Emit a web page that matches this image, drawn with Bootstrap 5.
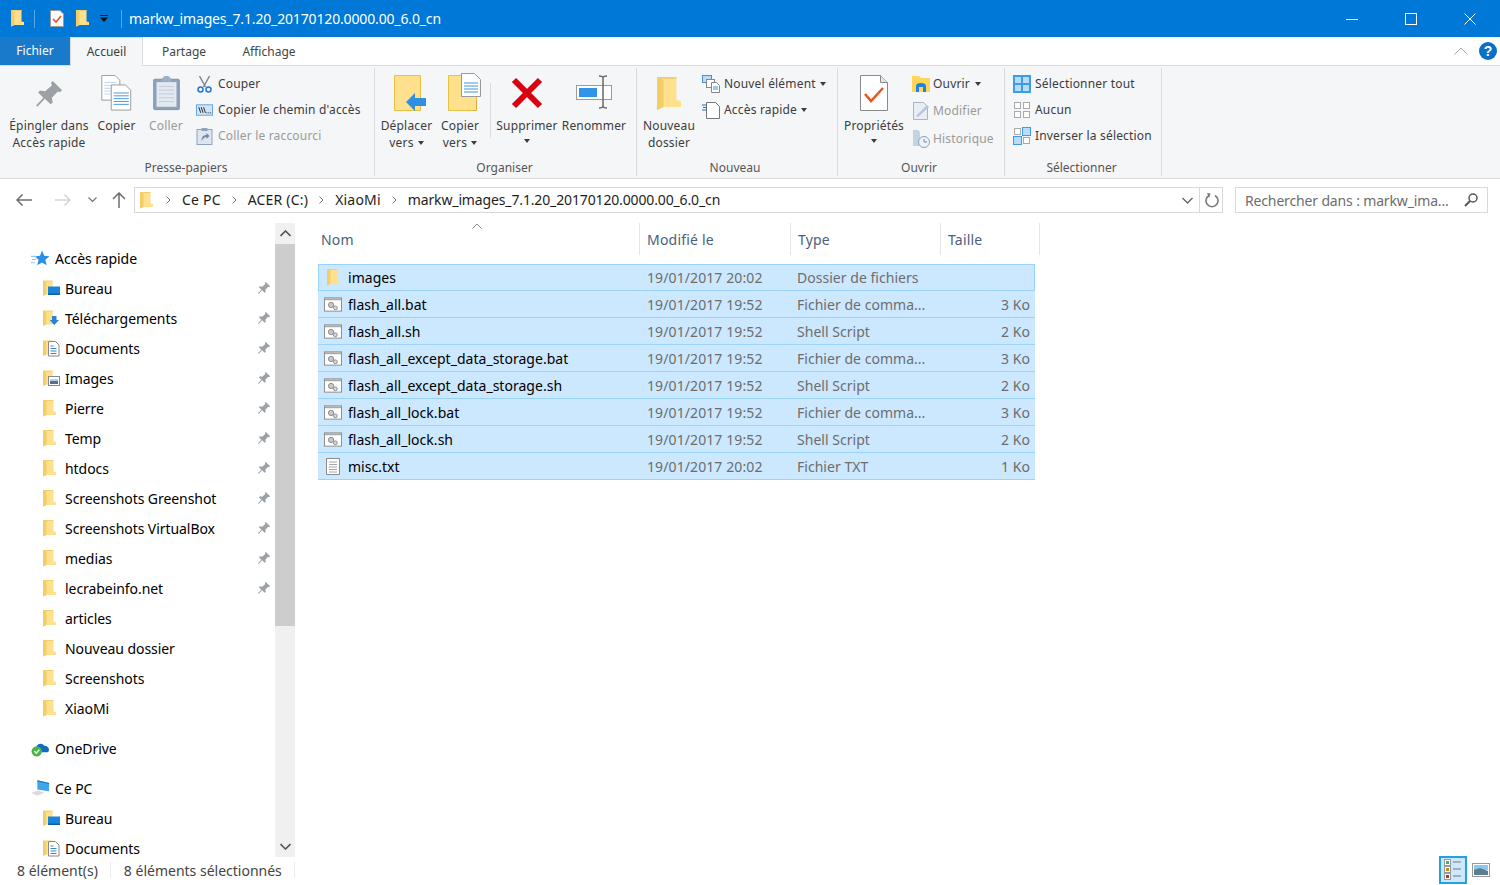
<!DOCTYPE html>
<html lang="fr">
<head>
    <meta charset="UTF-8">
    <title>markw_images_7.1.20_20170120.0000.00_6.0_cn</title>
    <link href="https://cdn.jsdelivr.net/npm/bootstrap@5.3.0/dist/css/bootstrap.min.css" rel="stylesheet">
    <style>
        html, body { height: 885px; overflow: hidden; }
        body { font-family: "Noto Sans", "Open Sans", sans-serif; font-size: 12px; color: #3c3c3c; background: #fff; }
        svg { display: block; flex: none; }

        /* barre de titre */
        .title-bar { height: 37px; background: #0078d7; color: #fff; }
        .title-text { font-size: 14px; margin-left: 7px; letter-spacing: -.15px; }
        .qa-sep { width: 1px; height: 18px; background: #5aa7e4; }
        .qa-1 { margin-left: 11px; }
        .qa-2 { margin-left: 10px; }
        .qa-3 { margin-left: 15px; }
        .qa-4 { margin-left: 12px; }
        .qa-5 { margin-left: 11px; }
        .qa-6 { margin-left: 13px; }
        .win-group { margin-right: 1px; }
        .win-btn { width: 59px; height: 37px; }

        /* onglets */
        .tab-row { height: 29px; border-bottom: 1px solid #dadbdc; }
        .tab-item { height: 29px; color: #444; }
        .tab-file { width: 70px; background: #1979ca; color: #fff; height: 28px; }
        .tab-home { width: 73px; background: #f5f6f7; border: 1px solid #dadbdc; border-bottom: 0; color: #3c3c3c; }
        .tab-share { width: 82px; }
        .tab-view { width: 88px; }
        .tab-tools { height: 28px; }
        .help-dot { width: 18px; height: 18px; border-radius: 50%; background: #0a6fc9; color: #fff; font: bold 14px/18px "Liberation Sans", sans-serif; text-align: center; margin: 0 3px 0 11px; }

        /* ruban */
        .ribbon { height: 113px; background: #f5f6f7; border-bottom: 1px solid #dadbdc; padding-top: 2px; letter-spacing: .18px; }
        .rb-group { height: 108px; border-right: 1px solid #dadbdc; }
        .rb-g1 { width: 375px; padding-left: 5px; }
        .rb-g2 { width: 262px; padding-left: 4px; }
        .rb-g3 { width: 201px; padding-left: 4px; }
        .rb-g4 { width: 167px; padding-left: 4px; }
        .rb-g5 { width: 157px; padding-left: 8px; }
        .rb-body { height: 91px; }
        .rb-name { height: 17px; line-height: 17px; color: #555; text-align: center; letter-spacing: 0; }
        .rb-g1 .rb-name { margin-left: -7px; }
        .rb-g2 .rb-name { margin-left: -6px; }
        .rb-g3 .rb-name { margin-left: -8px; }
        .rb-g4 .rb-name { margin-left: -8px; }
        .rb-g5 .rb-name { margin-left: -11px; }
        .rb-big { height: 86px; text-align: center; line-height: 17px; white-space: nowrap; }
        .rb-icon { height: 49px; padding-top: 7px; }
        .rb-off { color: #9a9a9a; }
        .rb-w88 { width: 88px; } .rb-w47 { width: 47px; } .rb-w52 { width: 52px; }
        .rb-w53 { width: 53px; } .rb-w54 { width: 54px; } .rb-w62 { width: 62px; }
        .rb-w68 { width: 68px; } .rb-w56 { width: 56px; } .rb-w64 { width: 64px; }
        .rb-nudge-1 { margin-left: 1px; }
        .rb-nudge-2 { margin-left: 2px; }
        .rb-icon-low { margin-top: 2px; }
        .rb-icon-pin { margin-top: 4px; }
        .rb-icon-move { margin-left: 6px; }
        .rb-icon-copyto { margin-left: 8px; margin-top: -2px; }
        .rb-small { padding-top: 3px; padding-left: 4px; }
        .rb-small-row { height: 26px; white-space: nowrap; gap: 5px; }
        .rb-small-tall { height: 27.5px; gap: 3px; }
        .rb-small-g3 { padding-left: 5px; }
        .rb-small-g3 .rb-small-row { gap: 4px; }
        .rb-small-g4 { padding: 2px 0 0 6px; }
        .rb-small-g4 .rb-caret { margin-left: 2px; }
        .rb-small-g5 { padding-left: 0; }
        .rb-small-g5 .rb-small-row { gap: 4px; }
        .rb-g1 .rb-small-row svg { width: 17px; }
        .rb-vsep { width: 1px; height: 55px; background: #dadbdc; margin: 15px 5px 0 3px; }
        .rb-caret { display: inline-block; width: 0; height: 0; border-left: 3.5px solid transparent; border-right: 3.5px solid transparent; border-top: 4px solid #3c3c3c; vertical-align: 2px; margin-left: 4px; }
        .rb-small-row .rb-caret { margin-left: 0; }
        .rb-small-g4 .rb-small-row .rb-caret { margin-left: 2px; }
        .rb-caret-alone { display: block; margin: 5px auto 0; }

        /* barre d'adresse */
        .addr-row { height: 44px; padding: 8px 12px 0 0; font-size: 14px; color: #1e1e1e; }
        .addr-nav { width: 134px; height: 25px; }
        .addr-back { margin-left: 16px; }
        .addr-fwd { margin-left: 23px; }
        .addr-hist { margin-left: 17px; }
        .addr-up { margin-left: 15px; }
        .addr-box { width: 1089px; height: 26px; border: 1px solid #d9d9d9; padding-left: 5px; white-space: nowrap; }
        .addr-crumb { margin: -2px 11px 0; letter-spacing: .2px; }
        .addr-last { margin: -2px 0 0 11px; letter-spacing: -.14px; }
        .addr-first { margin-left: 13px; }
        .addr-tail { margin-left: auto; width: 40px; height: 24px; }
        .addr-tail-sep { width: 1px; height: 24px; background: #d9d9d9; margin: 0 5px 0 6px; }
        .search-box { width: 253px; height: 26px; margin-left: 12px; border: 1px solid #d9d9d9; padding: 0 9px; color: #6d6d6d; white-space: nowrap; letter-spacing: -.15px; }

        /* volets */
        .panes { height: 634px; font-size: 14px; color: #000; }
        .nav-pane { width: 275px; padding-top: 20px; overflow: hidden; letter-spacing: -.06px; }
        .nav-row { height: 30px; white-space: nowrap; padding-right: 4px; }
        .nav-top { padding-left: 31px; gap: 5px; }
        .nav-sub { padding-left: 43px; gap: 5px; }
        .nav-gap { margin-top: 10px; }
        .nav-pin { margin-left: auto; }
        .scroll-bar { width: 20px; height: 634px; background: #f0f0f0; }
        .scroll-btn { height: 21px; }
        .scroll-thumb { height: 382px; background: #cdcdcd; }

        .file-pane { margin-left: 2px; padding-left: 21px; }
        .head-row { height: 32px; color: #4c607a; letter-spacing: .2px; }
        .head-cell { height: 32px; padding-left: 7px; border-right: 1px solid #e5e5e5; }
        .col-name { width: 322px; }
        .col-date { width: 151px; }
        .col-type { width: 150px; }
        .col-size { width: 99px; }
        .head-first { padding-left: 3px; }
        .sort-mark { left: 154px; top: 0; }
        .file-list { margin-top: 9px; width: 717px; }
        .file-row { height: 27px; background: #cce8ff; border-bottom: 1px solid #99d1ff; white-space: nowrap; color: #6d6d6d; letter-spacing: .03px; }
        .file-focus { border: 1px solid #99d1ff; }
        .file-name { width: 329px; padding-left: 6px; gap: 6px; color: #000; letter-spacing: .03px; }
        .file-name svg { width: 18px; }
        .file-date { width: 150px; letter-spacing: .1px; }
        .file-type { width: 150px; }
        .file-size { width: 88px; text-align: right; padding-right: 5px; }
        .file-focus .file-name { width: 328px; padding-left: 5px; }
        .file-focus .file-size { width: 87px; padding-right: 4px; }

        /* barre d'etat */
        .status-row { height: 28px; font-size: 14px; color: #444; padding: 0 0 2px 17px; white-space: nowrap; }
        .status-sep { width: 1px; height: 16px; background: #ececec; margin-left: 12px; }
        .status-gap { margin-left: 13px; }
        .status-view { width: 28px; height: 28px; background: #cce8ff; border: 2px solid #26a0da; }
        .status-thumb { margin: 0 10px 0 5px; }
    </style>
</head>
<body>
    <svg width="0" height="0" class="position-absolute">
        <defs>
            <symbol id="folder" viewBox="0 0 13 17"><path d="M0 0h10.500v11.500l2.500 .5v3H3.500L0 16.500z" fill="#ffe08c"/><path d="M0 0l3.500 1.500V15L0 16.500z" fill="#f3cd68"/><path d="M0 0h10.500v1H0z" fill="#f2cf6c"/></symbol>
            <symbol id="pin" viewBox="0 0 16 16"><path d="M10 1l5 5-1.300 1-1-.4-3.200 3.400.5 2.500-1.200 1-3-3L1.800 14.800l-.7-.7L5 10 2.200 7.200l1-1.100 2.700.4 3.600-3.100-.4-1.400z" fill="#9ba1a6"/></symbol>
            <symbol id="star" viewBox="0 0 18 16"><path d="M10.500 .5l2 5 5 .4-3.900 3.300 1.300 5.300-4.500-2.800-4.500 2.800 1.300-5.300L3.500 6l5 -.5z" fill="#2a8fe6"/><path d="M0 6h5M1 9h4M0 12h4" stroke="#8cc6f2"/></symbol>
            <symbol id="sub-desktop" viewBox="0 0 17 17"><use href="#folder" width="12" height="17"/><path d="M5 6.500h12V15H5z" fill="#1a84dc"/><path d="M5 13.500h12V15H5z" fill="#0f5fa8"/></symbol>
            <symbol id="sub-down" viewBox="0 0 17 17"><use href="#folder" width="12" height="17"/><path d="M9 6h4.500v4H16l-4.700 5-4.700-5H9z" fill="#2f7fd6"/></symbol>
            <symbol id="sub-docs" viewBox="0 0 17 17"><use href="#folder" width="12" height="17"/><path d="M5.500 1.500h7l3.500 3.500v11H5.500z" fill="#fff" stroke="#888"/><path d="M7.500 6h3M7.500 8.500h6M7.500 11h6M7.500 13.500h6" stroke="#3b87c8"/></symbol>
            <symbol id="sub-pics" viewBox="0 0 17 17"><use href="#folder" width="12" height="17"/><rect x="5.500" y="6.500" width="11" height="9" fill="#fff" stroke="#888"/><path d="M7 9h8v2H7z" fill="#a9d3f2"/><path d="M7 11h8v3H7z" fill="#5b6f80"/></symbol>
            <symbol id="plain-folder" viewBox="0 0 17 17"><use href="#folder" width="13" height="17"/></symbol>
            <symbol id="onedrive" viewBox="0 0 20 18"><path d="M5 10c0-3 2-6 5-6 2 0 3 1 4 2 3 0 5 2 5 4.500 0 1.500-1 2.500-2.500 2.500H7c-1.500 0-2-1-2-3z" fill="#0f6cc4"/><circle cx="6" cy="12" r="5.500" fill="#4cb548"/><path d="M3.500 12l2 2 3.300-3.800" fill="none" stroke="#fff" stroke-width="1.500"/></symbol>
            <symbol id="pc" viewBox="0 0 21 18"><path d="M7 0l13 3v9L7 10z" fill="#3fa5ea"/><path d="M7 0l13 3v1L7 1z" fill="#1f6fb5"/><path d="M0 14l8-3 7 3-8 3z" fill="#dcdcdc"/></symbol>
            <symbol id="bat" viewBox="0 0 19 15"><rect x=".5" y=".5" width="18" height="14" fill="#fff" stroke="#8b8b8b"/><path d="M1 1h17v2H1z" fill="#a8a8a8"/><circle cx="7.500" cy="8" r="2.800" fill="#c9c9c9" stroke="#888"/><circle cx="12" cy="11" r="2" fill="#dcdcdc" stroke="#888"/></symbol>
            <symbol id="txt" viewBox="0 0 18 17"><path d="M2.500 .5h13v16h-13z" fill="#fff" stroke="#8b8b8b"/><path d="M5 4h8M5 6.500h8M5 9h8M5 11.500h8M5 14h8" stroke="#a6a6a6"/></symbol>
            <symbol id="check-doc" viewBox="0 0 14 17"><path d="M.5 .5h9.500l3.500 3.500v12.500H.5z" fill="#fbfbfb" stroke="#9a9a9a"/><path d="M3 9l3 3 5-6" fill="none" stroke="#e8551f" stroke-width="1.600"/></symbol>
            <symbol id="crumb" viewBox="0 0 5 8"><path d="M.5 .5L4 4 .5 7.500" fill="none" stroke="#777"/></symbol>
        </defs>
    </svg>

    <header class="title-bar d-flex align-items-center">
        <svg class="qa-1" width="13" height="17"><use href="#folder"/></svg>
        <span class="qa-sep qa-2"></span>
        <svg class="qa-3" width="14" height="17"><use href="#check-doc"/></svg>
        <svg class="qa-4" width="13" height="17"><use href="#folder"/></svg>
        <svg class="qa-5" width="8" height="7" viewBox="0 0 8 7"><path d="M0 0h8v1H0zM0 2.500h8L4 7z" fill="#111"/></svg>
        <span class="qa-sep qa-6"></span>
        <span class="title-text">markw_images_7.1.20_20170120.0000.00_6.0_cn</span>
        <div class="win-group ms-auto d-flex">
            <div class="win-btn d-flex align-items-center justify-content-center"><svg width="12" height="12"><path d="M0 6.500h12" stroke="#fff"/></svg></div>
            <div class="win-btn d-flex align-items-center justify-content-center"><svg width="12" height="12"><rect x=".5" y=".5" width="11" height="11" fill="none" stroke="#fff"/></svg></div>
            <div class="win-btn d-flex align-items-center justify-content-center"><svg width="12" height="12"><path d="M.5 .5l11 11M11.500 .5l-11 11" stroke="#fff"/></svg></div>
        </div>
    </header>

    <nav class="tab-row d-flex align-items-start">
        <div class="tab-item tab-file d-flex align-items-center justify-content-center">Fichier</div>
        <div class="tab-item tab-home d-flex align-items-center justify-content-center">Accueil</div>
        <div class="tab-item tab-share d-flex align-items-center justify-content-center">Partage</div>
        <div class="tab-item tab-view d-flex align-items-center justify-content-center">Affichage</div>
        <div class="tab-tools ms-auto d-flex align-items-center">
            <svg width="14" height="8"><path d="M.5 7.500L7 1l6.500 6.500" fill="none" stroke="#aaa"/></svg>
            <div class="help-dot">?</div>
        </div>
    </nav>

    <section class="ribbon d-flex">
        <div class="rb-group rb-g1">
            <div class="rb-body d-flex">
                <div class="rb-big rb-w88">
                    <div class="rb-icon d-flex justify-content-center"><svg class="rb-icon-pin" width="30" height="30"><use href="#pin"/></svg></div>
                    Épingler dans<br>Accès rapide
                </div>
                <div class="rb-big rb-w47">
                    <div class="rb-icon d-flex justify-content-center"><svg width="31" height="36" viewBox="0 0 32 38"><path d="M.5 .5h14l5 5v21H.5z" fill="#fff" stroke="#999"/><path d="M3 8h13M3 11h13M3 14h13M3 17h13M3 20h13" stroke="#b9d5ee"/><path d="M10.500 10.500h15l5.500 5.500v21H10.500z" fill="#fff" stroke="#999"/><path d="M13 19h16M13 22h16M13 25h16M13 28h16M13 31h16" stroke="#3f95e0"/></svg></div>
                    Copier
                </div>
                <div class="rb-big rb-w52 rb-off">
                    <div class="rb-icon d-flex justify-content-center"><svg width="27" height="36" viewBox="0 0 28 38"><rect x=".5" y="4.500" width="27" height="32" rx="1" fill="#8da3bc" stroke="#7b91aa"/><rect x="3.500" y="7.500" width="21" height="26" fill="#e4e8f0"/><path d="M6 12h16M6 16h16M6 20h16M6 24h16M6 28h16" stroke="#c3ccd9"/><path d="M9 4l3-3h4l3 3v3H9z" fill="#9cafc5"/></svg></div>
                    Coller
                </div>
                <div class="rb-small">
                    <div class="rb-small-row d-flex align-items-center"><svg width="16" height="18" viewBox="0 0 16 18"><path d="M3 1l6 11M13 1L7 12" stroke="#7a8a98" stroke-width="1.500"/><circle cx="4" cy="14.500" r="2.500" fill="none" stroke="#1f78d1" stroke-width="1.500"/><circle cx="12" cy="14.500" r="2.500" fill="none" stroke="#1f78d1" stroke-width="1.500"/></svg>Couper</div>
                    <div class="rb-small-row d-flex align-items-center"><svg width="18" height="12" viewBox="0 0 18 12"><rect x=".5" y=".5" width="17" height="11" fill="#cfe6fa" stroke="#5ea5df"/><path d="M3 3l2 6M5.500 3l2 6M8 3l2 6" stroke="#222"/><path d="M11 9h1M13 9h1M15 9h1" stroke="#222"/></svg>Copier le chemin d'accès</div>
                    <div class="rb-small-row rb-off d-flex align-items-center"><svg width="16" height="18" viewBox="0 0 16 18"><rect x=".5" y="2.500" width="15" height="15" fill="#dfe5ee" stroke="#8da3bc"/><path d="M5 1h6v3H5z" fill="#8da3bc"/><path d="M5 14c0-4 2-6 5-6V6l3 3-3 3v-2c-2 0-3 1-5 4z" fill="#6c8aae"/></svg>Coller le raccourci</div>
                </div>
            </div>
            <div class="rb-name">Presse-papiers</div>
        </div>

        <div class="rb-group rb-g2">
            <div class="rb-body d-flex">
                <div class="rb-big rb-w53 rb-nudge-1">
                    <div class="rb-icon d-flex justify-content-center"><svg class="rb-icon-move" width="32" height="36" viewBox="0 0 32 36"><path d="M.5 .5h26v35H.5z" fill="#ffe08c" stroke="#e8c043"/><path d="M12 27l9-9v5h11v8H21v5z" fill="#2f8fe0"/></svg></div>
                    Déplacer<br>vers<span class="rb-caret"></span>
                </div>
                <div class="rb-big rb-w54">
                    <div class="rb-icon d-flex justify-content-center"><svg class="rb-icon-copyto" width="33" height="38" viewBox="0 0 33 38"><path d="M.5 2.500h28v35H.5z" fill="#ffe08c" stroke="#e8c043"/><path d="M28.500 27v10M25 37.500h3" stroke="#d8ad3a"/><path d="M13.500 .5h13l6 6v17h-19z" fill="#fff" stroke="#999"/><path d="M16 10h14M16 13h14M16 16h14M16 19h14" stroke="#3f95e0"/></svg></div>
                    Copier<br>vers<span class="rb-caret"></span>
                </div>
                <span class="rb-vsep"></span>
                <div class="rb-big rb-w62">
                    <div class="rb-icon d-flex justify-content-center"><svg class="rb-icon-low" width="32" height="32" viewBox="0 0 32 32"><path d="M3 3l26 26M29 3L3 29" stroke="#d9000f" stroke-width="6"/></svg></div>
                    Supprimer<span class="rb-caret rb-caret-alone"></span>
                </div>
                <div class="rb-big rb-w68 rb-nudge-2">
                    <div class="rb-icon d-flex justify-content-center"><svg width="36" height="34" viewBox="0 0 36 34"><rect x=".5" y="10.500" width="35" height="14" fill="#fff" stroke="#9a9a9a"/><rect x="3" y="13" width="18" height="9" fill="#2f95e8"/><path d="M27 2v30M23 1c2 0 4 0 4 2 0-2 2-2 4-2M23 33c2 0 4 0 4-2 0 2 2 2 4 2" fill="none" stroke="#6a6a6a" stroke-width="1.500"/></svg></div>
                    Renommer
                </div>
            </div>
            <div class="rb-name">Organiser</div>
        </div>

        <div class="rb-group rb-g3">
            <div class="rb-body d-flex">
                <div class="rb-big rb-w56">
                    <div class="rb-icon d-flex justify-content-center"><svg class="rb-icon-low" width="24" height="34" viewBox="0 0 13 17" preserveAspectRatio="none"><use href="#folder"/></svg></div>
                    Nouveau<br>dossier
                </div>
                <div class="rb-small rb-small-g3">
                    <div class="rb-small-row d-flex align-items-center"><svg width="18" height="18" viewBox="0 0 18 18"><rect x=".5" y=".5" width="9" height="7" fill="#bcdcf5" stroke="#4b8fcb"/><rect x="4.500" y="4.500" width="8" height="8" fill="#fff" stroke="#888"/><path d="M9.500 7.500h5l3 3v7h-8z" fill="#fff" stroke="#888"/><path d="M11 12h5M11 14h5" stroke="#3f95e0"/></svg>Nouvel élément<span class="rb-caret"></span></div>
                    <div class="rb-small-row d-flex align-items-center"><svg width="18" height="18" viewBox="0 0 18 18"><path d="M4.500 1.500h9l4 4v12h-13z" fill="#fff" stroke="#777"/><path d="M0 4h5M1 6.500h4M0 9h5" stroke="#2a6fb5"/></svg>Accès rapide<span class="rb-caret"></span></div>
                </div>
            </div>
            <div class="rb-name">Nouveau</div>
        </div>

        <div class="rb-group rb-g4">
            <div class="rb-body d-flex">
                <div class="rb-big rb-w64">
                    <div class="rb-icon d-flex justify-content-center"><svg width="28" height="36" viewBox="0 0 28 36"><path d="M.5 .5h20l7 7v28H.5z" fill="#fff" stroke="#8a8a8a"/><path d="M20.500 .5v7h7" fill="#e4e4e4" stroke="#8a8a8a"/><path d="M5 19l6 7 12-13" fill="none" stroke="#e8551f" stroke-width="2.500"/></svg></div>
                    Propriétés<span class="rb-caret rb-caret-alone"></span>
                </div>
                <div class="rb-small rb-small-g4">
                    <div class="rb-small-row rb-small-tall d-flex align-items-center"><svg width="18" height="16" viewBox="0 0 18 16"><path d="M0 0h7l2 2h9v14H0z" fill="#ffd65a"/><path d="M4 16v-6c0-2 2-3 5-3s5 1 5 3v6h-3v-5H7v5z" fill="#1f84dc"/></svg>Ouvrir<span class="rb-caret"></span></div>
                    <div class="rb-small-row rb-small-tall rb-off d-flex align-items-center"><svg width="18" height="18" viewBox="0 0 18 18"><path d="M1.500 .5h10l4 4v13h-14z" fill="#e9eef4" stroke="#a5b6c9"/><path d="M4 14L15 3l2 2L6 15z" fill="#b6c6d8"/></svg>Modifier</div>
                    <div class="rb-small-row rb-small-tall rb-off d-flex align-items-center"><svg width="18" height="18" viewBox="0 0 18 18"><path d="M1 0h5l2 2v14H1z" fill="#c3d2e4"/><circle cx="12" cy="12" r="5.500" fill="#eef2f7" stroke="#8da3bc"/><path d="M12 9v3h3" fill="none" stroke="#6c8aae"/></svg>Historique</div>
                </div>
            </div>
            <div class="rb-name">Ouvrir</div>
        </div>

        <div class="rb-group rb-g5">
            <div class="rb-body">
                <div class="rb-small rb-small-g5">
                    <div class="rb-small-row d-flex align-items-center"><svg width="18" height="18"><rect width="18" height="18" fill="#3d9be8"/><rect x="2" y="2" width="6" height="6" fill="#b5dcf9"/><rect x="10" y="2" width="6" height="6" fill="#b5dcf9"/><rect x="2" y="10" width="6" height="6" fill="#b5dcf9"/><rect x="10" y="10" width="6" height="6" fill="#b5dcf9"/></svg>Sélectionner tout</div>
                    <div class="rb-small-row d-flex align-items-center"><svg width="18" height="18" fill="#fff" stroke="#aaa"><rect x="1.500" y="1.500" width="6" height="6"/><rect x="10.500" y="1.500" width="6" height="6"/><rect x="1.500" y="10.500" width="6" height="6"/><rect x="10.500" y="10.500" width="6" height="6"/></svg>Aucun</div>
                    <div class="rb-small-row d-flex align-items-center"><svg width="18" height="18"><rect x="1.500" y="1.500" width="6" height="6" fill="#fff" stroke="#aaa"/><rect x="9.500" y=".5" width="8" height="8" fill="#b5dcf9" stroke="#3d9be8"/><rect x=".5" y="9.500" width="8" height="8" fill="#b5dcf9" stroke="#3d9be8"/><rect x="10.500" y="10.500" width="6" height="6" fill="#fff" stroke="#aaa"/></svg>Inverser la sélection</div>
                </div>
            </div>
            <div class="rb-name">Sélectionner</div>
        </div>
    </section>

    <div class="addr-row d-flex align-items-start">
        <div class="addr-nav d-flex align-items-center">
            <svg class="addr-back" width="16" height="12"><path d="M16 6H1M6.500 .5L1 6l5.500 5.500" fill="none" stroke="#6d6d6d" stroke-width="1.500"/></svg>
            <svg class="addr-fwd" width="16" height="12"><path d="M0 6h15M9.500 .5L15 6l-5.500 5.500" fill="none" stroke="#d5d5d5" stroke-width="1.500"/></svg>
            <svg class="addr-hist" width="9" height="5"><path d="M.5 .5l4 4 4-4" fill="none" stroke="#777" stroke-width="1.200"/></svg>
            <svg class="addr-up" width="14" height="16"><path d="M7 16V1M1 7l6-6 6 6" fill="none" stroke="#6d6d6d" stroke-width="1.500"/></svg>
        </div>
        <div class="addr-box d-flex align-items-center">
            <svg width="13" height="17"><use href="#folder"/></svg>
            <svg class="addr-first" width="5" height="8"><use href="#crumb"/></svg>
            <span class="addr-crumb">Ce PC</span>
            <svg width="5" height="8"><use href="#crumb"/></svg>
            <span class="addr-crumb">ACER (C:)</span>
            <svg width="5" height="8"><use href="#crumb"/></svg>
            <span class="addr-crumb">XiaoMi</span>
            <svg width="5" height="8"><use href="#crumb"/></svg>
            <span class="addr-last">markw_images_7.1.20_20170120.0000.00_6.0_cn</span>
            <div class="addr-tail d-flex align-items-center">
                <svg width="11" height="7"><path d="M.5 1L5.500 6l5-5" fill="none" stroke="#666" stroke-width="1.400"/></svg>
                <span class="addr-tail-sep"></span>
                <svg width="14" height="15"><path d="M4 2.500A6 6 0 1 0 10 2.500" fill="none" stroke="#777" stroke-width="1.600"/><path d="M2 0l3.500 .5L4 5z" fill="#777"/></svg>
            </div>
        </div>
        <div class="search-box d-flex align-items-center">
            <span>Rechercher dans : markw_ima...</span>
            <svg class="ms-auto" width="14" height="14"><circle cx="9" cy="5" r="4" fill="none" stroke="#555" stroke-width="1.500"/><path d="M6 8l-5 5" stroke="#555" stroke-width="2"/></svg>
        </div>
    </div>

    <main class="panes d-flex">
        <aside class="nav-pane">
            <div class="nav-row nav-top d-flex align-items-center"><svg width="19" height="17"><use href="#star"/></svg>Accès rapide</div>
            <div class="nav-row nav-sub d-flex align-items-center"><svg width="17" height="17"><use href="#sub-desktop"/></svg>Bureau<svg class="nav-pin" width="14" height="14"><use href="#pin"/></svg></div>
            <div class="nav-row nav-sub d-flex align-items-center"><svg width="17" height="17"><use href="#sub-down"/></svg>Téléchargements<svg class="nav-pin" width="14" height="14"><use href="#pin"/></svg></div>
            <div class="nav-row nav-sub d-flex align-items-center"><svg width="17" height="17"><use href="#sub-docs"/></svg>Documents<svg class="nav-pin" width="14" height="14"><use href="#pin"/></svg></div>
            <div class="nav-row nav-sub d-flex align-items-center"><svg width="17" height="17"><use href="#sub-pics"/></svg>Images<svg class="nav-pin" width="14" height="14"><use href="#pin"/></svg></div>
            <div class="nav-row nav-sub d-flex align-items-center"><svg width="17" height="17"><use href="#plain-folder"/></svg>Pierre<svg class="nav-pin" width="14" height="14"><use href="#pin"/></svg></div>
            <div class="nav-row nav-sub d-flex align-items-center"><svg width="17" height="17"><use href="#plain-folder"/></svg>Temp<svg class="nav-pin" width="14" height="14"><use href="#pin"/></svg></div>
            <div class="nav-row nav-sub d-flex align-items-center"><svg width="17" height="17"><use href="#plain-folder"/></svg>htdocs<svg class="nav-pin" width="14" height="14"><use href="#pin"/></svg></div>
            <div class="nav-row nav-sub d-flex align-items-center"><svg width="17" height="17"><use href="#plain-folder"/></svg>Screenshots Greenshot<svg class="nav-pin" width="14" height="14"><use href="#pin"/></svg></div>
            <div class="nav-row nav-sub d-flex align-items-center"><svg width="17" height="17"><use href="#plain-folder"/></svg>Screenshots VirtualBox<svg class="nav-pin" width="14" height="14"><use href="#pin"/></svg></div>
            <div class="nav-row nav-sub d-flex align-items-center"><svg width="17" height="17"><use href="#plain-folder"/></svg>medias<svg class="nav-pin" width="14" height="14"><use href="#pin"/></svg></div>
            <div class="nav-row nav-sub d-flex align-items-center"><svg width="17" height="17"><use href="#plain-folder"/></svg>lecrabeinfo.net<svg class="nav-pin" width="14" height="14"><use href="#pin"/></svg></div>
            <div class="nav-row nav-sub d-flex align-items-center"><svg width="17" height="17"><use href="#plain-folder"/></svg>articles</div>
            <div class="nav-row nav-sub d-flex align-items-center"><svg width="17" height="17"><use href="#plain-folder"/></svg>Nouveau dossier</div>
            <div class="nav-row nav-sub d-flex align-items-center"><svg width="17" height="17"><use href="#plain-folder"/></svg>Screenshots</div>
            <div class="nav-row nav-sub d-flex align-items-center"><svg width="17" height="17"><use href="#plain-folder"/></svg>XiaoMi</div>
            <div class="nav-row nav-top nav-gap d-flex align-items-center"><svg width="19" height="17"><use href="#onedrive"/></svg>OneDrive</div>
            <div class="nav-row nav-top nav-gap d-flex align-items-center"><svg width="19" height="17"><use href="#pc"/></svg>Ce PC</div>
            <div class="nav-row nav-sub d-flex align-items-center"><svg width="17" height="17"><use href="#sub-desktop"/></svg>Bureau</div>
            <div class="nav-row nav-sub d-flex align-items-center"><svg width="17" height="17"><use href="#sub-docs"/></svg>Documents</div>
        </aside>
        <div class="scroll-bar d-flex flex-column">
            <div class="scroll-btn d-flex align-items-center justify-content-center"><svg width="11" height="7"><path d="M.5 6L5.500 1l5 5" fill="none" stroke="#555" stroke-width="1.600"/></svg></div>
            <div class="scroll-thumb"></div>
            <div class="scroll-btn mt-auto d-flex align-items-center justify-content-center"><svg width="11" height="7"><path d="M.5 1L5.500 6l5-5" fill="none" stroke="#555" stroke-width="1.600"/></svg></div>
        </div>

        <section class="file-pane">
            <div class="head-row d-flex position-relative">
                <div class="head-cell head-first col-name d-flex align-items-center">Nom</div>
                <div class="head-cell col-date d-flex align-items-center">Modifié le</div>
                <div class="head-cell col-type d-flex align-items-center">Type</div>
                <div class="head-cell col-size d-flex align-items-center">Taille</div>
                <svg class="sort-mark position-absolute" width="10" height="6"><path d="M.5 5.500L5 1l4.500 4.500" fill="none" stroke="#888"/></svg>
            </div>
            <div class="file-list">
                <div class="file-row file-focus d-flex align-items-center"><div class="file-name d-flex align-items-center"><svg width="18" height="17" viewBox="0 0 18 17"><use href="#folder" x="3" width="13" height="17"/></svg>images</div><div class="file-date">19/01/2017 20:02</div><div class="file-type">Dossier de fichiers</div><div class="file-size"></div></div>
                <div class="file-row d-flex align-items-center"><div class="file-name d-flex align-items-center"><svg width="18" height="15"><use href="#bat"/></svg>flash_all.bat</div><div class="file-date">19/01/2017 19:52</div><div class="file-type">Fichier de comma...</div><div class="file-size">3 Ko</div></div>
                <div class="file-row d-flex align-items-center"><div class="file-name d-flex align-items-center"><svg width="18" height="15"><use href="#bat"/></svg>flash_all.sh</div><div class="file-date">19/01/2017 19:52</div><div class="file-type">Shell Script</div><div class="file-size">2 Ko</div></div>
                <div class="file-row d-flex align-items-center"><div class="file-name d-flex align-items-center"><svg width="18" height="15"><use href="#bat"/></svg>flash_all_except_data_storage.bat</div><div class="file-date">19/01/2017 19:52</div><div class="file-type">Fichier de comma...</div><div class="file-size">3 Ko</div></div>
                <div class="file-row d-flex align-items-center"><div class="file-name d-flex align-items-center"><svg width="18" height="15"><use href="#bat"/></svg>flash_all_except_data_storage.sh</div><div class="file-date">19/01/2017 19:52</div><div class="file-type">Shell Script</div><div class="file-size">2 Ko</div></div>
                <div class="file-row d-flex align-items-center"><div class="file-name d-flex align-items-center"><svg width="18" height="15"><use href="#bat"/></svg>flash_all_lock.bat</div><div class="file-date">19/01/2017 19:52</div><div class="file-type">Fichier de comma...</div><div class="file-size">3 Ko</div></div>
                <div class="file-row d-flex align-items-center"><div class="file-name d-flex align-items-center"><svg width="18" height="15"><use href="#bat"/></svg>flash_all_lock.sh</div><div class="file-date">19/01/2017 19:52</div><div class="file-type">Shell Script</div><div class="file-size">2 Ko</div></div>
                <div class="file-row d-flex align-items-center"><div class="file-name d-flex align-items-center"><svg width="18" height="17"><use href="#txt"/></svg>misc.txt</div><div class="file-date">19/01/2017 20:02</div><div class="file-type">Fichier TXT</div><div class="file-size">1 Ko</div></div>
            </div>
        </section>
    </main>

    <footer class="status-row d-flex align-items-center">
        <span>8 élément(s)</span>
        <span class="status-sep"></span>
        <span class="status-gap">8 éléments sélectionnés</span>
        <span class="status-sep"></span>
        <div class="status-view ms-auto d-flex align-items-center justify-content-center">
            <svg width="18" height="22" viewBox="0 0 18 22"><rect x=".5" y=".5" width="6" height="6" fill="#fff" stroke="#999"/><rect x=".5" y="7.500" width="6" height="6" fill="#fff" stroke="#999"/><rect x=".5" y="14.500" width="6" height="6" fill="#fff" stroke="#999"/><path d="M2 2h3v3H2z" fill="#4a8"/><path d="M2 9h3v3H2z" fill="#b83"/><path d="M2 16h3v3H2z" fill="#a33"/><path d="M9 3h8M9 10h8M9 17h8" stroke="#777"/></svg>
        </div>
        <svg class="status-thumb" width="18" height="14" viewBox="0 0 18 14"><rect x=".5" y=".5" width="17" height="13" fill="#fff" stroke="#999"/><path d="M2 2h14v5H2z" fill="#8cc8ec"/><path d="M2 7l6-2 8 3v4H2z" fill="#5b7f90"/></svg>
    </footer>
</body>
</html>
